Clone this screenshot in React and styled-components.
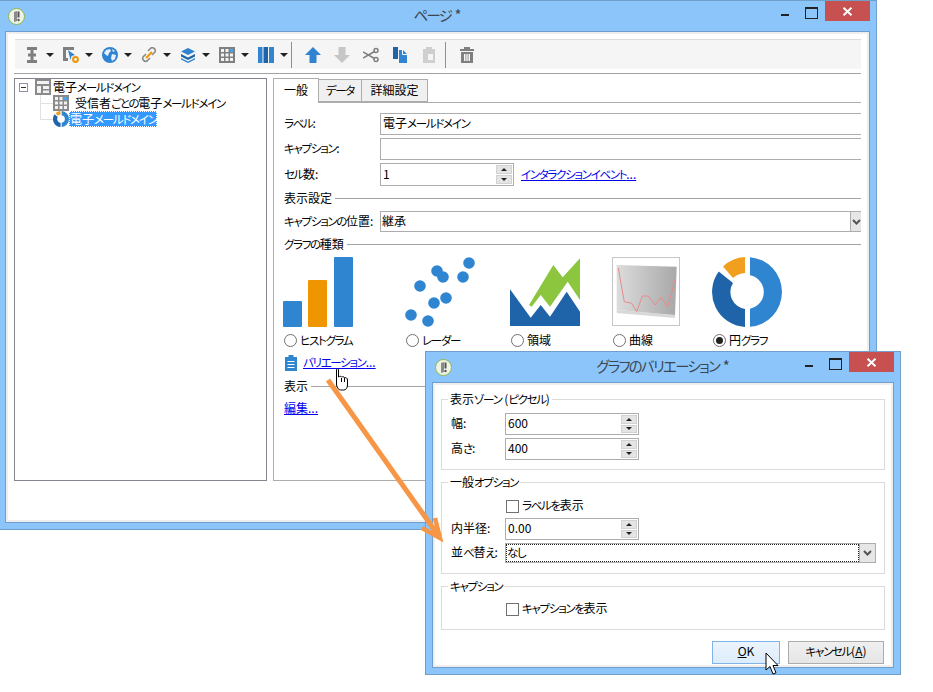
import React from 'react';
import styled, { createGlobalStyle } from 'styled-components';

const GlobalStyle = createGlobalStyle`
  html, body {
    margin: 0;
    padding: 0;
    background: #fff;
  }
  * {
    box-sizing: border-box;
  }
`;

const Desktop = styled.div`
  position: relative;
  width: 933px;
  height: 692px;
  overflow: hidden;
  font-family: "Noto Sans CJK JP", "Noto Sans", sans-serif;
  font-size: 12px;
  font-feature-settings: "palt";
  color: #000;
`;

/* the two windows sit on a free desktop */
const Window = styled.div`
  position: absolute;
  left: ${(p) => p.$x}px;
  top: ${(p) => p.$y}px;
  width: ${(p) => p.$w}px;
  height: ${(p) => p.$h}px;
  display: flex;
  flex-direction: column;
  padding: 0 6px 6px ${(p) => p.$padLeft ?? 6}px;
  background: #8cc5fa;
  border: 1px solid #6f9fca;
`;

const TitleBar = styled.div`
  height: 30px;
  flex: none;
  display: grid;
  grid-template-columns: 1fr auto 1fr;
`;

const TitleIconCell = styled.div`
  display: flex;
  align-items: center;
  padding-left: ${(p) => p.$pad}px;
`;

const Title = styled.div`
  font-size: 15px;
  line-height: 28px;
  color: #3c4650;
  white-space: nowrap;
`;

const Controls = styled.div`
  display: flex;
  justify-content: flex-end;
  align-items: flex-start;
`;

const MinButton = styled.div`
  width: 24px;
  height: 20px;
  display: flex;
  justify-content: center;
  padding-top: 13px;
  &::before {
    content: '';
    width: 8px;
    height: 2px;
    background: #222;
  }
`;

const MaxButton = styled.div`
  width: 28px;
  height: 20px;
  display: flex;
  justify-content: center;
  padding-top: 6px;
  &::before {
    content: '';
    width: 11px;
    height: 9px;
    border: 1px solid #222;
    border-top-width: 2px;
  }
`;

const CloseButton = styled.div`
  width: 45px;
  height: 20px;
  background: #c75050;
  display: flex;
  align-items: center;
  justify-content: center;
`;

const Body = styled.div`
  flex: 1;
  min-height: 0;
  background: #fff;
  border: 1px solid #6d9ecf;
  box-shadow: inset 0 0 0 2px #eeeeee;
  padding: ${(p) => p.$padding};
  display: flex;
  flex-direction: column;
`;

/* main window toolbar */
const Toolbar = styled.div`
  height: 30px;
  margin-left: 1px;
  background: #f5f5f5;
  border-top: 1px solid #dcdcdc;
  display: flex;
  align-items: center;
  padding-left: 9px;
`;

const ToolIcon = styled.svg`
  width: 16px;
  height: 16px;
  flex: none;
  margin-right: ${(p) => p.$gap ?? 13}px;
`;

const DropArrow = styled.span`
  flex: none;
  width: 0;
  height: 0;
  margin-right: ${(p) => p.$gap ?? 9}px;
  border-left: 4px solid transparent;
  border-right: 4px solid transparent;
  border-top: 4px solid #222;
`;

const ToolSep = styled.span`
  flex: none;
  width: 1px;
  height: 26px;
  background: #8f8f8f;
  margin: 0 13px 0 ${(p) => p.$left}px;
`;

const Rule = styled.div`
  height: 1px;
  background: #a3a3a3;
  margin-top: 4px;
  flex: none;
`;

const Columns = styled.div`
  display: flex;
  gap: 6px;
  margin-top: 4px;
  height: 403px;
  flex: none;
`;

/* tree on the left */
const TreePane = styled.div`
  width: 253px;
  flex: none;
  border: 1px solid #85858f;
`;

const TreeRow = styled.div`
  display: flex;
  height: 16px;
  align-items: center;
  padding-left: ${(p) => p.$indent}px;
`;

const Expander = styled.span`
  flex: none;
  width: 9px;
  height: 9px;
  border: 1px solid #8a94a6;
  margin-right: 7px;
  display: flex;
  align-items: center;
  justify-content: center;
  &::before {
    content: '';
    width: 5px;
    height: 1px;
    background: #333;
  }
`;

const Connector = styled.span`
  flex: none;
  align-self: stretch;
  width: 13px;
  background:
    linear-gradient(#e2e2e2, #e2e2e2) left top / 1px ${(p) => (p.$last ? '50%' : '100%')} no-repeat,
    linear-gradient(#e2e2e2, #e2e2e2) left center / 100% 1px no-repeat;
`;

const TreeIcon = styled.svg`
  flex: none;
  width: 16px;
  height: 16px;
`;

const TreeText = styled.span`
  margin-left: ${(p) => p.$left ?? 0}px;
  white-space: nowrap;
  line-height: 16px;
  ${(p) =>
    p.$selected &&
    `
    background: #3399ff;
    color: #fff;
    outline: 1px dotted #fff;
    outline-offset: -1px;
    padding: 0 1px;
  `}
`;

/* tabbed panel on the right */
const RightPane = styled.div`
  flex: 1;
  display: flex;
  flex-direction: column;
  min-width: 0;
`;

const TabRow = styled.div`
  display: flex;
  align-items: flex-end;
  height: 24px;
  flex: none;
`;

const Tab = styled.div`
  height: ${(p) => (p.$active ? 25 : 23)}px;
  width: ${(p) => p.$w}px;
  margin-bottom: ${(p) => (p.$active ? -1 : 0)}px;
  margin-left: ${(p) => (p.$first ? 0 : -1)}px;
  border: 1px solid #adadad;
  border-bottom-width: ${(p) => (p.$active ? 0 : 1)}px;
  background: ${(p) => (p.$active ? '#fff' : '#f0f0f0')};
  position: relative;
  z-index: ${(p) => (p.$active ? 1 : 0)};
  display: flex;
  align-items: center;
  justify-content: center;
  line-height: 1;
`;

const TabPanel = styled.div`
  flex: 1;
  border: 1px solid #adadad;
  border-right: 0;
  padding: 10px 0 0 10px;
  display: flex;
  flex-direction: column;
`;

const FieldRow = styled.div`
  display: flex;
  align-items: center;
  height: ${(p) => p.$h ?? 22}px;
  margin-top: ${(p) => p.$top ?? 0}px;
  flex: none;
`;

const FieldLabel = styled.label`
  width: ${(p) => p.$w}px;
  flex: none;
  white-space: nowrap;
`;

const TextBox = styled.div`
  height: 100%;
  flex: ${(p) => (p.$w ? 'none' : '1')};
  min-width: 0;
  width: ${(p) => (p.$w ? `${p.$w}px` : 'auto')};
  border: 1px solid #adadad;
  border-right-width: ${(p) => (p.$w ? 1 : 0)}px;
  background: #fff;
  padding-left: ${(p) => p.$pad ?? 2}px;
  display: flex;
  align-items: center;
  justify-content: space-between;
  white-space: nowrap;
`;

const Spinner = styled.div`
  flex: none;
  width: 16px;
  align-self: stretch;
  margin: 1px 1px 1px 0;
  display: flex;
  flex-direction: column;
  gap: 1px;
`;

const SpinButton = styled.div`
  flex: 1;
  background: #e4e4e4;
  border: 1px solid #d2d2d2;
  display: flex;
  align-items: center;
  justify-content: center;
  &::before {
    content: '';
    border-left: 3px solid transparent;
    border-right: 3px solid transparent;
    ${(p) => (p.$down ? 'border-top: 3px solid #222;' : 'border-bottom: 3px solid #222;')}
  }
`;

const ComboArrow = styled.div`
  flex: none;
  width: ${(p) => p.$w}px;
  align-self: stretch;
  background: #e6e6e6;
  border-left: 1px solid #adadad;
  display: flex;
  align-items: center;
  justify-content: center;
`;

const NavLink = styled.a`
  color: #0000ee;
  text-decoration: underline;
  white-space: nowrap;
  margin-left: ${(p) => p.$left ?? 0}px;
  margin-bottom: 3px;
`;

const SectionHeader = styled.div`
  display: flex;
  align-items: center;
  gap: 3px;
  height: 16px;
  margin-top: ${(p) => p.$top ?? 4}px;
  flex: none;
  white-space: nowrap;
  &::after {
    content: '';
    flex: 1;
    height: 1px;
    background: #a3a3a3;
  }
`;

const ChartGrid = styled.div`
  display: grid;
  grid-template-columns: 122px 105px 102px 100px 70px;
  margin: 5px 0 0 -1px;
  flex: none;
`;

const ChartOption = styled.div`
  display: flex;
  flex-direction: column;
  gap: 5px;
`;

const ChartPic = styled.svg`
  display: block;
  width: 70px;
  height: 70px;
`;

const RadioRow = styled.div`
  display: flex;
  align-items: center;
  gap: 3px;
  height: 16px;
  padding-left: 1px;
  white-space: nowrap;
`;

const RadioDot = styled.span`
  flex: none;
  width: 13px;
  height: 13px;
  border-radius: 50%;
  border: 1px solid #707070;
  background: #fff;
  display: flex;
  align-items: center;
  justify-content: center;
  ${(p) =>
    p.$checked &&
    `
    &::before {
      content: '';
      width: 7px;
      height: 7px;
      border-radius: 50%;
      background: #222;
    }
  `}
`;

const IconLinkRow = styled.div`
  display: flex;
  align-items: center;
  height: 16px;
  margin-top: 7px;
  padding-left: 1px;
  flex: none;
`;

const PlainRow = styled.div`
  display: flex;
  align-items: center;
  height: 16px;
  margin-top: 7px;
  flex: none;
`;

/* dialog */
const Group = styled.fieldset`
  margin: 0;
  padding: 0 0 0 9px;
  border: 1px solid #dcdcdc;
  height: ${(p) => p.$h}px;
  margin-top: ${(p) => p.$top ?? 0}px;
  flex: none;
  display: flex;
  flex-direction: column;
  legend {
    margin-left: -3px;
    padding: 0 2px;
    line-height: 16px;
    height: 16px;
  }
`;

const CheckRow = styled.div`
  display: flex;
  align-items: center;
  gap: 3px;
  height: 16px;
  margin-top: ${(p) => p.$top}px;
  padding-left: 55px;
  flex: none;
  white-space: nowrap;
`;

const CheckBox = styled.span`
  flex: none;
  width: 13px;
  height: 13px;
  border: 1px solid #707070;
  background: #fff;
`;

const FocusValue = styled.span`
  flex: 1;
  align-self: stretch;
  display: flex;
  align-items: center;
  outline: 1px dotted #222;
  outline-offset: -1px;
  padding-left: 1px;
`;

const ButtonRow = styled.div`
  display: flex;
  justify-content: flex-end;
  gap: 8px;
  margin-top: 11px;
  padding-right: 1px;
  flex: none;
`;

const DialogButton = styled.div`
  height: 23px;
  width: ${(p) => p.$w}px;
  display: flex;
  align-items: center;
  justify-content: center;
  border: 1px solid ${(p) => (p.$primary ? '#7eb4ea' : '#acacac')};
  background: ${(p) => (p.$primary ? 'linear-gradient(#ecf4fc, #dcecfc)' : 'linear-gradient(#f0f0f0, #e5e5e5)')};
  u {
    text-underline-offset: 1px;
  }
`;

const ArrowOverlay = styled.svg`
  position: absolute;
  left: 320px;
  top: 370px;
  width: 130px;
  height: 175px;
`;

const Pointer = styled.svg`
  position: absolute;
  left: ${(p) => p.$x}px;
  top: ${(p) => p.$y}px;
  width: ${(p) => p.$w}px;
  height: ${(p) => p.$h}px;
`;

/* text run: the reference font has narrow kana, Noto's are wide */
const TextRun = styled.span`
  display: inline-block;
  white-space: nowrap;
  text-decoration: inherit;
  margin-bottom: ${(p) => p.$up ?? 0}px;
`;

const Kana = styled.span`
  font-size: 0.96em;
  letter-spacing: -0.115em;
`;

function T({ up, children }) {
  const parts = React.Children.toArray(children).flatMap((child) => {
    if (typeof child !== 'string') return [child];
    return child
      .split(/([\u3040-\u30ff]+)/)
      .filter(Boolean)
      .map((run, i) => (/^[\u3040-\u30ff]/.test(run) ? <Kana key={`${run}${i}`}>{run}</Kana> : run));
  });
  return <TextRun $up={up}>{parts}</TextRun>;
}

function AppLogo() {
  return (
    <svg width="17" height="17" viewBox="0 0 17 17">
      <circle cx="8.5" cy="8.5" r="8" fill="#eef3e6" stroke="#8bb84a" strokeWidth="1" />
      <path d="M6 4l3-1v10l-3 1z" fill="#8a8a8a" />
      <path d="M9.5 3.5h2v6h-2z" fill="#555" />
      <circle cx="10.5" cy="12" r="1.2" fill="#555" />
    </svg>
  );
}

function CloseGlyph() {
  return (
    <svg width="11" height="9" viewBox="0 0 11 9">
      <path d="M1.5 .8l8 7.4M9.5 .8l-8 7.4" stroke="#fff" strokeWidth="2" fill="none" />
    </svg>
  );
}

function WindowControls() {
  return (
    <Controls>
      <MinButton />
      <MaxButton />
      <CloseButton>
        <CloseGlyph />
      </CloseButton>
    </Controls>
  );
}

function Chevron() {
  return (
    <svg width="9" height="6" viewBox="0 0 9 6">
      <path d="M1 1l3.5 3.5L8 1" stroke="#555" strokeWidth="2" fill="none" />
    </svg>
  );
}

function SpinBox() {
  return (
    <Spinner>
      <SpinButton />
      <SpinButton $down />
    </Spinner>
  );
}

function Donut({ size = 70 }) {
  return (
    <svg width={size} height={size} viewBox="0 0 70 70" style={{ display: 'block' }}>
      <path d="M38 .13A35 35 0 0 1 38 69.87V51.7A17 17 0 0 0 38 18.3z" fill="#3085d1" />
      <path d="M33 69.94A35 35 0 0 1 6.7 14.5L21 26A17 17 0 0 0 33 51.9z" fill="#1f63a9" />
      <path d="M33 .06A35 35 0 0 0 11 9.5L21 21A19 19 0 0 1 33 16z" fill="#f0a01e" />
    </svg>
  );
}

const scatterDots = [
  [6, 58], [23, 64], [15, 29], [29, 46], [41, 41], [32, 14], [38, 20], [58, 20], [64, 6],
];

export default function App() {
  return (
    <Desktop>
      <GlobalStyle />
      <Window $x={-1} $y={0} $w={878} $h={530} $padLeft={5}>
        <TitleBar>
          <TitleIconCell $pad={3}>
            <AppLogo />
          </TitleIconCell>
          <Title><T>ページ *</T></Title>
          <WindowControls />
        </TitleBar>
        <Body $padding="7px 8px 0 8px">
          <Toolbar>
            <ToolIcon $gap={6} viewBox="0 0 16 16">
              <path d="M3 0h10v3H9.500v3.500H12v3H9.500V13H13v3H3v-3h3.500V9.500H4v-3h2.500V3H3z" fill="#7f7f7f" />
            </ToolIcon>
            <DropArrow />
            <ToolIcon $gap={6} viewBox="0 0 16 16">
              <path d="M0 0h11v3H3v8h2v3H0z" fill="#7f7f7f" />
              <path d="M5 3l7 5-3.500 1L7.500 13z" fill="#2f83d0" />
              <circle cx="12.500" cy="12.500" r="2.400" fill="none" stroke="#ee9500" strokeWidth="2" />
            </ToolIcon>
            <DropArrow />
            <ToolIcon $gap={6} viewBox="0 0 16 16">
              <circle cx="8" cy="8" r="8" fill="#2f83d0" />
              <path d="M4 3l4-1 1 2-2 2-1 3-2-1-2-2zM10 7l4 1-1 4-3 2-1-3zM10 2l3 2-2 1z" fill="#e8f1fa" />
            </ToolIcon>
            <DropArrow />
            <ToolIcon $gap={6} viewBox="0 0 16 16">
              <path d="M7 4l3-3a3 3 0 0 1 4 4l-3 3M5 7L2 10a3 3 0 0 0 4 4l3-3" fill="none" stroke="#8a8a8a" strokeWidth="1.600" />
              <path d="M5 11l6-6" stroke="#ee9500" strokeWidth="2" />
            </ToolIcon>
            <DropArrow />
            <ToolIcon $gap={6} viewBox="0 0 16 16">
              <path d="M8 1l7 3.500L8 8 1 4.500z" fill="#2f83d0" />
              <path d="M1 7l7 3.500L15 7v2.500L8 13 1 9.500z" fill="#1f63a9" />
              <path d="M1 11l7 3.500L15 11v1.500L8 16 1 12.500z" fill="#2f83d0" />
            </ToolIcon>
            <DropArrow />
            <ToolIcon $gap={6} viewBox="0 0 16 16">
              <path d="M0 0h16v16H0z" fill="#7f7f7f" />
              <path d="M2 2h3v3H2zM6.500 2h3v3h-3zM2 6.500h3v3H2zM6.500 6.500h3v3h-3zM11 6.500h3v3h-3zM2 11h3v3H2zM6.500 11h3v3h-3zM11 11h3v3h-3z" fill="#f5f5f5" />
              <path d="M11 2h3v3h-3z" fill="#4da3e8" />
            </ToolIcon>
            <DropArrow />
            <ToolIcon $gap={6} viewBox="0 0 16 16">
              <path d="M0 0h4.500v16H0z" fill="#3085d1" />
              <path d="M5.500 0H10v16H5.500z" fill="#1f63a9" />
              <path d="M11 0h5v16h-5z" fill="#3085d1" />
            </ToolIcon>
            <DropArrow $gap={0} />
            <ToolSep $left={3} />
            <ToolIcon viewBox="0 0 16 16">
              <path d="M8 0l8 8h-4.500v8h-7V8H0z" fill="#2f83d0" />
            </ToolIcon>
            <ToolIcon viewBox="0 0 16 16">
              <path d="M8 16L0 8h4.500V0h7v8H16z" fill="#c6c6c6" />
            </ToolIcon>
            <ToolIcon viewBox="0 0 16 16">
              <circle cx="13" cy="3.500" r="2" fill="none" stroke="#7f7f7f" strokeWidth="1.500" />
              <circle cx="13" cy="12.500" r="2" fill="none" stroke="#7f7f7f" strokeWidth="1.500" />
              <path d="M11.500 4.500L0 11M11.500 11.500L0 5" stroke="#7f7f7f" strokeWidth="1.500" />
            </ToolIcon>
            <ToolIcon viewBox="0 0 16 16">
              <path d="M1 0h5v12H1z" fill="#1f63a9" />
              <path d="M7 3h4l4 4v9H7z" fill="#3085d1" />
              <path d="M10.500 3v4.500H15" fill="none" stroke="#fff" strokeWidth="1" />
            </ToolIcon>
            <ToolIcon $gap={0} viewBox="0 0 16 16">
              <path d="M2 2h3V0h6v2h3v14H2z" fill="#cfcfcf" />
              <path d="M7 7h5v6H7z" fill="#f5f5f5" />
            </ToolIcon>
            <ToolSep $left={8} />
            <ToolIcon viewBox="0 0 16 16">
              <path d="M1 2h14v2H1zM5 0h6v2H5z" fill="#7f7f7f" />
              <path d="M2 5h12v11H2z" fill="#7f7f7f" />
              <path d="M5 7h1.500v7H5zM7.300 7h1.400v7H7.300zM9.500 7H11v7H9.500z" fill="#f5f5f5" />
            </ToolIcon>
          </Toolbar>
          <Rule />
          <Columns>
            <TreePane>
              <TreeRow $indent={4}>
                <Expander />
                <TreeIcon viewBox="0 0 16 16">
                  <path d="M0 0h16v16H0z" fill="#8a8a8a" />
                  <path d="M2 2h12v3H2zM2 7h4v7H2zM8 7h6v3H8zM8 11.500h6V14H8z" fill="#f2f2f2" />
                </TreeIcon>
                <TreeText $left={2}><T>電子メールドメイン</T></TreeText>
              </TreeRow>
              <TreeRow $indent={25}>
                <Connector />
                <TreeIcon viewBox="0 0 16 16">
                  <path d="M0 0h16v16H0z" fill="#8a8a8a" />
                  <path d="M2 2h3v3H2zM6.500 2h3v3h-3zM2 6.500h3v3H2zM6.500 6.500h3v3h-3zM11 6.500h3v3h-3zM2 11h3v3H2zM6.500 11h3v3h-3zM11 11h3v3h-3z" fill="#f2f2f2" />
                  <path d="M11 2h3v3h-3z" fill="#4da3e8" />
                </TreeIcon>
                <TreeText $left={6}><T>受信者ごとの電子メールドメイン</T></TreeText>
              </TreeRow>
              <TreeRow $indent={25}>
                <Connector $last />
                <TreeIcon as="span">
                  <Donut size={16} />
                </TreeIcon>
                <TreeText $selected><T>電子メールドメイン</T></TreeText>
              </TreeRow>
            </TreePane>
            <RightPane>
              <TabRow>
                <Tab $first $active $w={46}><T up={2}>一般</T></Tab>
                <Tab $w={44}><T up={1}>データ</T></Tab>
                <Tab $w={67}><T up={1}>詳細設定</T></Tab>
              </TabRow>
              <TabPanel>
                <FieldRow>
                  <FieldLabel $w={96}><T up={3}>ラベル:</T></FieldLabel>
                  <TextBox><T up={3}>電子メールドメイン</T></TextBox>
                </FieldRow>
                <FieldRow $top={3}>
                  <FieldLabel $w={96}><T up={3}>キャプション:</T></FieldLabel>
                  <TextBox />
                </FieldRow>
                <FieldRow $top={3} $h={23}>
                  <FieldLabel $w={96}><T up={3}>セル数:</T></FieldLabel>
                  <TextBox $w={134}>
                    <T up={3}>1</T>
                    <SpinBox />
                  </TextBox>
                  <NavLink $left={7}><T>インタラクションイベント...</T></NavLink>
                </FieldRow>
                <SectionHeader><T up={2}>表示設定</T></SectionHeader>
                <FieldRow $top={5} $h={21}>
                  <FieldLabel $w={96}><T up={3}>キャプションの位置:</T></FieldLabel>
                  <TextBox $pad={1}>
                    <T up={3}>継承</T>
                    <ComboArrow $w={11}>
                      <Chevron />
                    </ComboArrow>
                  </TextBox>
                </FieldRow>
                <SectionHeader><T up={2}>グラフの種類</T></SectionHeader>
                <ChartGrid>
                  <ChartOption>
                    <ChartPic viewBox="0 0 70 70">
                      <rect x="0" y="44" width="19" height="26" rx="1" fill="#3085d1" />
                      <rect x="25" y="23" width="19" height="47" rx="1" fill="#ee9500" />
                      <rect x="51" y="0" width="19" height="70" rx="1" fill="#3085d1" />
                    </ChartPic>
                    <RadioRow>
                      <RadioDot />
                      <T up={2}>ヒストグラム</T>
                    </RadioRow>
                  </ChartOption>
                  <ChartOption>
                    <ChartPic viewBox="0 0 70 70">
                      {scatterDots.map(([cx, cy]) => (
                        <circle key={`${cx}-${cy}`} cx={cx} cy={cy} r="5.800" fill="#3085d1" />
                      ))}
                    </ChartPic>
                    <RadioRow>
                      <RadioDot />
                      <T up={2}>レーダー</T>
                    </RadioRow>
                  </ChartOption>
                  <ChartOption>
                    <ChartPic viewBox="0 0 70 70">
                      <path d="M0 32.300L20.700 60.700 30.700 48 40 59.700 56.700 34.700 70 54.700V69H0z" fill="#1f63a9" />
                      <path d="M43.300 8L52.700 20.300 70 1.300V43L57.700 24.700 40 49.700 30.700 38 21.700 49.700 19 48z" fill="#8cc63f" />
                    </ChartPic>
                    <RadioRow>
                      <RadioDot />
                      <T up={2}>領域</T>
                    </RadioRow>
                  </ChartOption>
                  <ChartOption>
                    <ChartPic viewBox="0 0 70 70">
                      <defs>
                        <linearGradient id="lineBg" x1="0" y1="0" x2="1" y2="0">
                          <stop offset="0" stopColor="#dcdcdc" />
                          <stop offset="1" stopColor="#a8a8a8" />
                        </linearGradient>
                      </defs>
                      <rect x=".5" y=".5" width="67" height="68" fill="#fff" stroke="#8a8a8a" strokeDasharray="1 1" />
                      <path d="M4.700 53L63 58v3L4.700 56z" fill="#d8d8d8" />
                      <path d="M4.700 8L64.700 9.700 63 58 4.700 53z" fill="url(#lineBg)" />
                      <path d="M6.300 11L12.300 44.700 19.700 46.300 24.700 54.700 30.300 39 36.300 39 43 48 49 40.300 55.700 49.700 63 23" fill="none" stroke="#e88a8a" strokeWidth="1" />
                    </ChartPic>
                    <RadioRow>
                      <RadioDot />
                      <T up={2}>曲線</T>
                    </RadioRow>
                  </ChartOption>
                  <ChartOption>
                    <Donut />
                    <RadioRow>
                      <RadioDot $checked />
                      <T up={2}>円グラフ</T>
                    </RadioRow>
                  </ChartOption>
                </ChartGrid>
                <IconLinkRow>
                  <svg width="12" height="16" viewBox="0 0 12 16">
                    <path d="M0 2h3.500V0h5v2H12v14H0z" fill="#3085d1" />
                    <path d="M2.500 6h7v1h-7zM2.500 9h7v1h-7zM2.500 12h7v1h-7z" fill="#fff" />
                  </svg>
                  <NavLink $left={6}><T>バリエーション...</T></NavLink>
                </IconLinkRow>
                <SectionHeader $top={7}><T up={2}>表示</T></SectionHeader>
                <PlainRow>
                  <NavLink><T>編集...</T></NavLink>
                </PlainRow>
              </TabPanel>
            </RightPane>
          </Columns>
        </Body>
      </Window>

      <Window $x={425} $y={351} $w={476} $h={324}>
        <TitleBar>
          <TitleIconCell $pad={3}>
            <AppLogo />
          </TitleIconCell>
          <Title><T>グラフのバリエーション *</T></Title>
          <WindowControls />
        </TitleBar>
        <Body $padding="8px 8px 0 8px">
          <Group $h={79}>
            <legend><T>表示ゾーン (ピクセル)</T></legend>
            <FieldRow $top={6}>
              <FieldLabel $w={54}><T up={3}>幅:</T></FieldLabel>
              <TextBox $w={134}>
                <T up={3}>600</T>
                <SpinBox />
              </TextBox>
            </FieldRow>
            <FieldRow $top={3}>
              <FieldLabel $w={54}><T up={3}>高さ:</T></FieldLabel>
              <TextBox $w={134}>
                <T up={3}>400</T>
                <SpinBox />
              </TextBox>
            </FieldRow>
          </Group>
          <Group $h={100} $top={4}>
            <legend><T>一般オプション</T></legend>
            <CheckRow $top={8}>
              <CheckBox />
              <T up={3}>ラベルを表示</T>
            </CheckRow>
            <FieldRow $top={4}>
              <FieldLabel $w={54}><T up={3}>内半径:</T></FieldLabel>
              <TextBox $w={134}>
                <T up={3}>0.00</T>
                <SpinBox />
              </TextBox>
            </FieldRow>
            <FieldRow $top={3} $h={20}>
              <FieldLabel $w={54}><T up={3}>並べ替え:</T></FieldLabel>
              <TextBox $w={371} $pad={0}>
                <FocusValue><T up={3}>なし</T></FocusValue>
                <ComboArrow $w={16}>
                  <Chevron />
                </ComboArrow>
              </TextBox>
            </FieldRow>
          </Group>
          <Group $h={52} $top={4}>
            <legend><T>キャプション</T></legend>
            <CheckRow $top={7}>
              <CheckBox />
              <T up={3}>キャプションを表示</T>
            </CheckRow>
          </Group>
          <ButtonRow>
            <DialogButton $primary $w={68}>
              <T up={4}>
                <u>O</u>K
              </T>
            </DialogButton>
            <DialogButton $w={96}>
              <T up={4}>
                キャンセル(<u>A</u>)
              </T>
            </DialogButton>
          </ButtonRow>
        </Body>
      </Window>

      <ArrowOverlay viewBox="0 0 130 175">
        <path d="M8 10L118 165" stroke="#f79646" strokeWidth="5" fill="none" />
        <path d="M115 148L120 168 102 158" stroke="#f79646" strokeWidth="4.500" fill="none" />
      </ArrowOverlay>

      <Pointer $x={334} $y={368} $w={15} $h={23} viewBox="0 0 15 23">
        <path
          d="M2.500 1.500C2.500 .5 4.500 .5 4.500 1.500V9C6 8 7 8 7.500 9 9 8.500 10 8.500 10.500 9.800 12 9.300 13.500 10 13.500 12V17C13.500 20 12 22 9.500 22H6.500C4.500 22 3.500 20 2.500 17L2.500 12z"
          fill="#fff"
          stroke="#000"
          strokeWidth="1"
        />
        <path d="M7.500 10v4M10.500 10v4" stroke="#000" strokeWidth="1" />
      </Pointer>
      <Pointer $x={765} $y={652} $w={14} $h={24} viewBox="0 0 14 24">
        <path d="M1 1V18L5 14.500 8 22 11 20.800 8 13.500H13z" fill="#fff" stroke="#000" strokeWidth="1" />
      </Pointer>
    </Desktop>
  );
}
